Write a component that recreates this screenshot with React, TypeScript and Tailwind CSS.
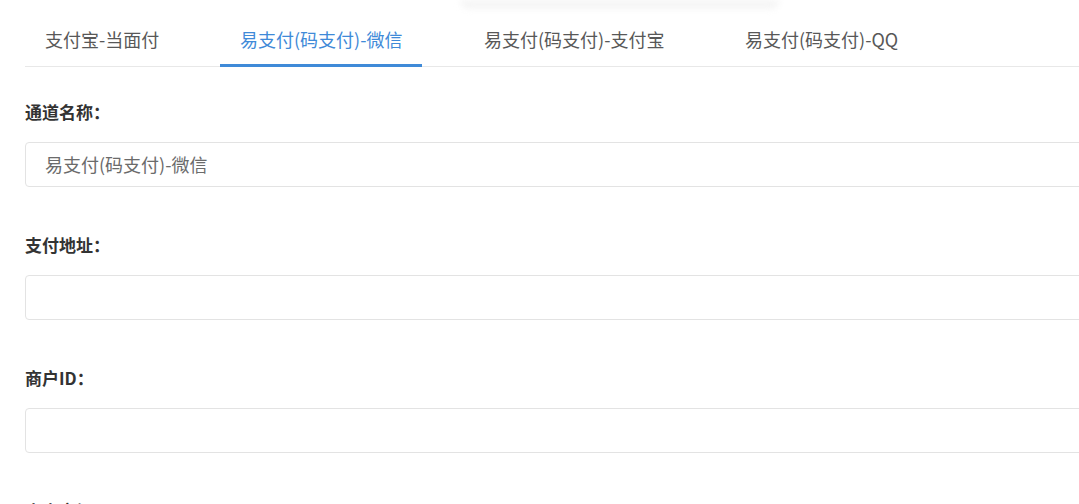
const tabs = [
  { label: '支付宝-当面付', w: 'w-[195px]' },
  { label: '易支付(码支付)-微信', w: 'w-[244px]', active: true },
  { label: '易支付(码支付)-支付宝', w: 'w-[261px]' },
  { label: '易支付(码支付)-QQ', w: 'w-[240px]' },
];

const fields = [
  { label: '通道名称：', value: '易支付(码支付)-微信' },
  { label: '支付地址：', value: '' },
  { label: '商户ID：', value: '' },
  { label: '商户密钥：', value: '' },
];

export default function App() {
  return (
    <div
      className="relative w-[1079px] h-[504px] overflow-hidden bg-white"
      style={{ fontFamily: '"Noto Sans CJK SC", "Noto Sans", sans-serif' }}
    >
      <div className="absolute left-[460px] top-0 w-[320px] h-[9px] rounded-b-full bg-[#f5f5f5] blur-[3px]" />

      <div className="relative ml-[25px] mt-[14px] w-[1100px] flex border-b border-[#e8e8e8]">
        {tabs.map((t) => (
          <div key={t.label} className={`${t.w} flex`}>
            <div
              className={`h-[53px] px-5 flex items-center text-[18px] -mb-px ${
                t.active
                  ? 'text-[#3f8ad8] border-b-[3px] border-[#3f8ad8]'
                  : 'text-[#585858] border-b-[3px] border-transparent'
              }`}
            >
              {t.label}
            </div>
          </div>
        ))}
      </div>

      <div className="pl-[25px] pt-[33px]">
        {fields.map((f) => (
          <div key={f.label} className="mb-[46px]">
            <div className="h-[24px] leading-[24px] text-[17px] font-bold text-[#333]">{f.label}</div>
            <div className="mt-[18px] w-[1100px] h-[45px] border border-[#e3e3e3] rounded-[4px] flex items-center pl-[19px] text-[18px] text-[#6b6b6b]">
              {f.value}
            </div>
          </div>
        ))}
      </div>
    </div>
  );
}
